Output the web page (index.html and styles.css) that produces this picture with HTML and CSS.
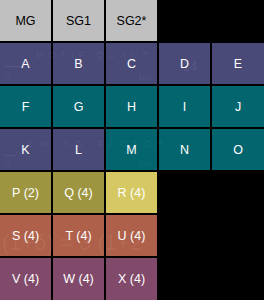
FILE: index.html
```html
<!DOCTYPE html>
<html>
<head>
<meta charset="utf-8">
<link rel="stylesheet" href="styles.css">
</head>
<body>
<div class="board">
  <div class="grid">
    <div class="cell hdr">MG</div>
    <div class="cell hdr">SG1</div>
    <div class="cell hdr">SG2*</div>
    <div class="cell empty"></div>
    <div class="cell empty"></div>

    <div class="cell blue">A</div>
    <div class="cell blue">B</div>
    <div class="cell blue">C</div>
    <div class="cell blue">D</div>
    <div class="cell blue">E</div>

    <div class="cell teal">F</div>
    <div class="cell teal">G</div>
    <div class="cell teal">H</div>
    <div class="cell teal">I</div>
    <div class="cell teal">J</div>

    <div class="cell blue">K</div>
    <div class="cell blue">L</div>
    <div class="cell teal">M</div>
    <div class="cell teal">N</div>
    <div class="cell teal">O</div>

    <div class="cell olive">P (2)</div>
    <div class="cell olive">Q (4)</div>
    <div class="cell yellow">R (4)</div>
    <div class="cell empty"></div>
    <div class="cell empty"></div>

    <div class="cell rust">S (4)</div>
    <div class="cell rust">T (4)</div>
    <div class="cell rust">U (4)</div>
    <div class="cell empty"></div>
    <div class="cell empty"></div>

    <div class="cell plum">V (4)</div>
    <div class="cell plum">W (4)</div>
    <div class="cell plum">X (4)</div>
    <div class="cell empty"></div>
    <div class="cell empty"></div>
  </div>
  <div class="ghost g-motif">MOTIF QUANT</div>
  <div class="ghost g-swing">SWING FACTOR</div>
  <div class="ghost g-zero1">0</div>
  <div class="ghost g-zero2">0</div>
  <div class="ghost g-100a">100</div>
  <div class="ghost g-100b">100</div>
  <div class="ghost g-14">14</div>
  <div class="ghost g-eq">(1+δ) = 3 (1+2</div>
  <div class="ghost g-line1"></div>
  <div class="ghost g-line2"></div>
</div>
</body>
</html>
```
FILE: styles.css
```css
html, body {
  margin: 0;
  padding: 0;
  background: #000;
}
.board {
  position: relative;
  width: 264px;
  height: 300px;
  overflow: hidden;
}
.grid {
  display: grid;
  grid-template-columns: 51px 51px 51px 51px 52px;
  grid-template-rows: repeat(6, 41px) 42px;
  gap: 2px;
  background: #000;
}
.cell {
  display: flex;
  align-items: center;
  justify-content: center;
  font-family: "Liberation Sans", Arial, sans-serif;
  font-size: 12.5px;
  color: #fff;
}
.hdr { background: #c0c0c0; color: #000; }
.empty { background: #000; }
.blue { background: #4a4a78; }
.teal { background: #03656e; }
.olive { background: #9e9540; }
.yellow { background: #d6c964; }
.rust { background: #ae604a; }
.plum { background: #814a6a; }

.ghost {
  position: absolute;
  font-family: "Liberation Sans", Arial, sans-serif;
  color: rgba(255,255,255,0.07);
  white-space: nowrap;
}
.g-motif { left: 36px; top: 50px; font-size: 9px; letter-spacing: 5px; }
.g-swing { left: 28px; top: 139px; font-size: 9px; letter-spacing: 6px; }
.g-zero1 { left: 5px; top: 73px; font-size: 8px; }
.g-zero2 { left: 5px; top: 161px; font-size: 8px; }
.g-100a { left: 138px; top: 73px; font-size: 8px; }
.g-100b { left: 138px; top: 160px; font-size: 8px; }
.g-14 { left: 182px; top: 58px; font-size: 14px; }
.g-eq { left: 2px; top: 230px; font-size: 22px; }
.g-line1 { left: 5px; top: 66px; width: 16px; height: 1px; background: rgba(255,255,255,0.08); }
.g-line2 { left: 5px; top: 155px; width: 10px; height: 1px; background: rgba(255,255,255,0.08); }
```
